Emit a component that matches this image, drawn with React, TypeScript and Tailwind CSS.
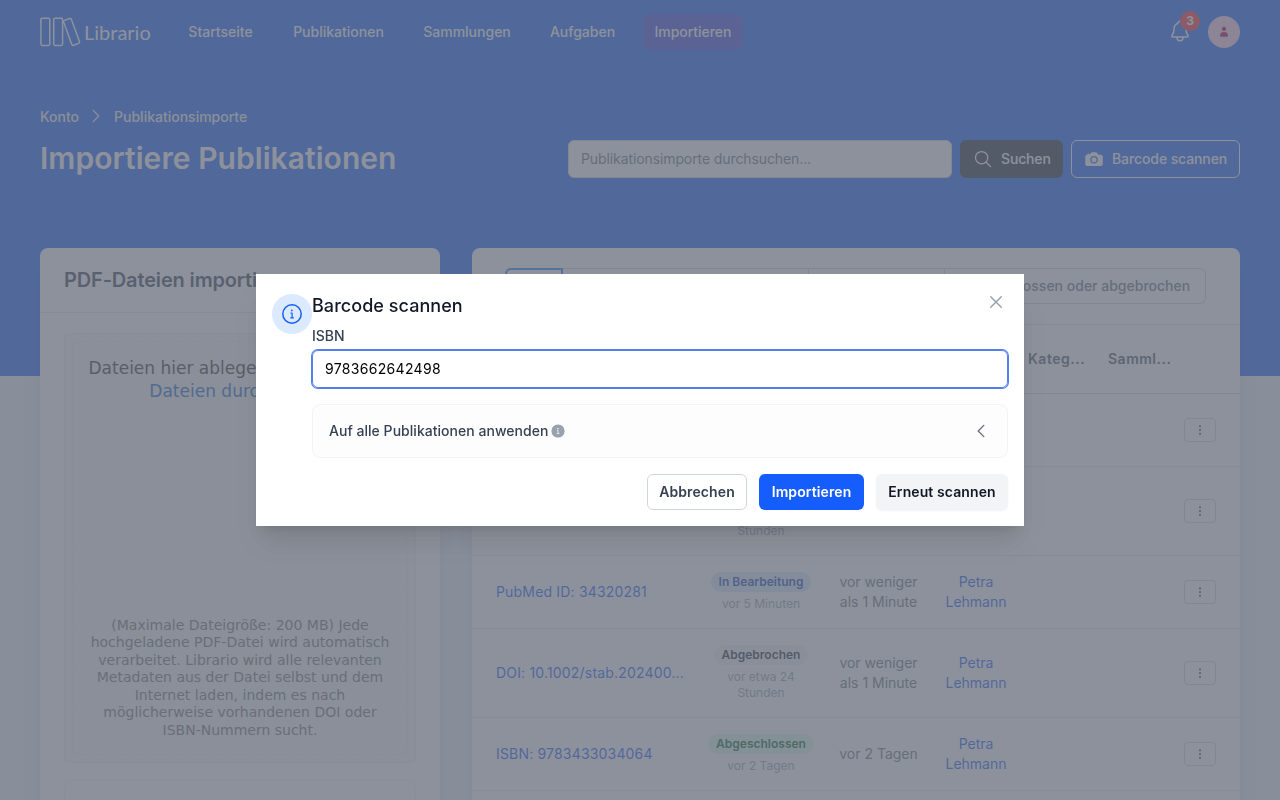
import { useState } from "react"
import {
  IoCamera,
  IoChevronBackOutline,
  IoChevronForwardOutline,
  IoCloseOutline,
  IoEllipsisVertical,
  IoNotificationsOutline,
  IoSearchOutline,
} from "react-icons/io5"

type Status = "In Bearbeitung" | "Abgebrochen" | "Abgeschlossen"

type ImportRow = {
  id: number
  name: string
  status: Status
  statusAge: string
  created: string
  user: string
}

const NAV = [
  { label: "Startseite", width: "w-[89px]" },
  { label: "Publikationen", width: "w-[115px]" },
  { label: "Sammlungen", width: "w-[110px]" },
  { label: "Aufgaben", width: "w-[89px]" },
  { label: "Importieren", width: "w-[100px]", active: true },
]

const ROWS: ImportRow[] = [
  { id: 1, name: "ISBN: 9783662642498", status: "In Bearbeitung", statusAge: "vor 1 Minute", created: "vor weniger als 1 Minute", user: "Petra Lehmann" },
  { id: 2, name: "DOI: 10.1002/best.202300", status: "Abgebrochen", statusAge: "vor etwa 24 Stunden", created: "vor weniger als 1 Minute", user: "Petra Lehmann" },
  { id: 3, name: "PubMed ID: 34320281", status: "In Bearbeitung", statusAge: "vor 5 Minuten", created: "vor weniger als 1 Minute", user: "Petra Lehmann" },
  { id: 4, name: "DOI: 10.1002/stab.202400...", status: "Abgebrochen", statusAge: "vor etwa 24 Stunden", created: "vor weniger als 1 Minute", user: "Petra Lehmann" },
  { id: 5, name: "ISBN: 9783433034064", status: "Abgeschlossen", statusAge: "vor 2 Tagen", created: "vor 2 Tagen", user: "Petra Lehmann" },
]

const BADGE: Record<Status, string> = {
  "In Bearbeitung": "bg-blue-100 text-blue-800",
  Abgebrochen: "bg-gray-100 text-gray-800",
  Abgeschlossen: "bg-green-100 text-green-800",
}

const GRID = "grid grid-cols-[225px_128px_107px_88px_80px_80px_60px] items-center"

function Logo() {
  return (
    <div className="flex h-8 w-[112px] items-center text-white">
      <svg width="42" height="32" viewBox="0 0 42 32" fill="none" stroke="currentColor" strokeWidth="1.5">
        <rect x="0.9" y="2.2" width="8.9" height="27.2" rx="1.4" />
        <rect x="13.7" y="2.2" width="8.9" height="27.2" rx="1.4" />
        <rect x="27.5" y="2.7" width="8.2" height="26.4" rx="1.4" transform="rotate(-20 31.6 15.9)" />
      </svg>
      <span className="ml-[2px] font-['Lato',sans-serif] text-[20px] leading-[30px]">Librario</span>
    </div>
  )
}

function InfoOutline() {
  return (
    <svg className="size-6" viewBox="0 0 24 24" fill="none" stroke="currentColor">
      <circle cx="12" cy="12" r="9.2" strokeWidth="1.5" />
      <circle cx="11.8" cy="8.4" r="0.9" fill="currentColor" stroke="none" />
      <path d="M10.8 11h1.3v4.6M10.7 15.8h2.8" strokeWidth="1.2" strokeLinecap="round" strokeLinejoin="round" />
    </svg>
  )
}

function InfoSolid() {
  return (
    <svg className="ml-[2px] size-4 text-gray-400" viewBox="0 0 16 16" fill="none">
      <circle cx="8" cy="8" r="6.6" fill="currentColor" />
      <circle cx="7.9" cy="5.8" r="0.7" fill="white" />
      <path d="M7.3 7.6h.8v2.7M7.2 10.4h1.8" stroke="white" strokeWidth="0.7" strokeLinecap="round" />
    </svg>
  )
}

function NavBar() {
  return (
    <nav className="flex h-16 items-center justify-between px-10">
      <div className="flex items-center">
        <Logo />
        <div className="ml-6 flex gap-4">
          {NAV.map((item) => (
            <a
              key={item.label}
              className={`${item.width} rounded-md py-2 text-center text-sm font-medium text-white ${item.active ? "bg-[#3b48e2] tracking-[-0.05px]" : ""}`}
            >
              {item.label}
            </a>
          ))}
        </div>
      </div>
      <div className="flex items-center gap-4">
        <div className="relative size-6 text-white">
          <IoNotificationsOutline className="-mt-px size-6" />
          <span className="absolute -top-[9px] left-3 flex size-5 items-center justify-center rounded-full bg-red-500 text-xs font-bold">3</span>
        </div>
        <div className="flex size-8 items-center justify-center rounded-full bg-pink-200 text-pink-800">
          <svg className="size-3" viewBox="0 0 12 12" fill="currentColor">
            <circle cx="6" cy="2.9" r="2.1" />
            <path d="M2 9.4c0-2.1 1.8-3.3 4-3.3s4 1.2 4 3.3c0 .9-.5 1.4-1.3 1.4H3.3C2.5 10.8 2 10.3 2 9.4z" />
          </svg>
        </div>
      </div>
    </nav>
  )
}

function PageHeader() {
  return (
    <header className="px-10 pt-[43px]">
      <div className="flex items-center text-sm font-medium text-gray-100">
        <span>Konto</span>
        <IoChevronForwardOutline className="-mt-0.5 mr-2 ml-[7px] size-5 [&_path]:[stroke-width:32px]" />
        <span>Publikationsimporte</span>
      </div>
      <div className="mt-[13px] flex items-center justify-between">
        <h1 className="pb-0.5 text-3xl font-semibold tracking-[0.06px] text-white">Importiere Publikationen</h1>
        <div className="flex gap-2">
          <input
            placeholder="Publikationsimporte durchsuchen..."
            className="h-[38px] w-96 rounded-md border border-gray-300 bg-white px-3 pb-0.5 text-sm tracking-[-0.1px] placeholder:text-gray-500"
          />
          <button className="flex h-[38px] w-[103px] items-center rounded-md bg-gray-800 pl-[13px] text-sm font-medium tracking-[-0.15px] text-white">
            <IoSearchOutline className="mr-2 size-5" />
            Suchen
          </button>
          <button className="flex h-[38px] w-[169px] items-center rounded-md border border-white pl-3 text-sm font-medium tracking-[-0.1px] text-white">
            <IoCamera className="mr-2 size-5" />
            Barcode scannen
          </button>
        </div>
      </div>
    </header>
  )
}

function ApplyToAll() {
  return (
    <div className="flex h-[54px] items-center justify-between rounded-lg border border-gray-100 bg-[#fdfdfe] px-4 text-sm font-medium text-gray-700">
      <span className="flex items-center tracking-[0.03px]">
        Auf alle Publikationen anwenden
        <InfoSolid />
      </span>
      <IoChevronBackOutline className="size-5 text-gray-500 [&_path]:[stroke-width:36px]" />
    </div>
  )
}

function UploadCard() {
  return (
    <section className="h-[700px] w-[400px] shrink-0 rounded-lg bg-white shadow-xl">
      <h2 className="flex h-[65px] items-center border-b border-gray-200 px-6 text-xl font-semibold tracking-[-0.15px] text-gray-700">
        PDF-Dateien importieren
      </h2>
      <div className="px-6 pt-5">
        <div className="h-[430px] rounded-[5px] border border-[#efefef] bg-[#f5f5f5] p-[7px] font-['DejaVu_Sans',sans-serif]">
          <div className="flex h-full flex-col items-center justify-between rounded border border-dashed border-[#ececec] px-2 pt-[15px] pb-[15px] text-center">
            <p className="w-[320px] text-[17px] leading-[23px] text-[#333]">
              Dateien hier ablegen einfügen oder <span className="text-[#1269cf]">Dateien durchsuchen</span>
            </p>
            <p className="w-[310px] text-[14px] leading-[17.5px] text-[#757575]">
              (Maximale Dateigröße: 200 MB) Jede hochgeladene PDF-Datei wird automatisch verarbeitet. Librario wird alle
              relevanten Metadaten aus der Datei selbst und dem Internet laden, indem es nach möglicherweise vorhandenen
              DOI oder ISBN-Nummern sucht.
            </p>
          </div>
        </div>
        <div className="mt-[17px]">
          <ApplyToAll />
        </div>
      </div>
    </section>
  )
}

function ImportTable() {
  return (
    <section className="h-[700px] flex-1 rounded-lg bg-white shadow-xl">
      <div className="flex h-[77px] border-b border-gray-200 pt-5 pl-[33px] text-sm font-medium text-gray-500">
        <div className="flex h-9 w-[58px] items-center justify-center rounded-l-md border-2 border-blue-500 text-blue-600">Alle</div>
        <div className="flex h-9 w-[246px] items-center justify-center border-y border-r border-gray-300">Wartend oder in Bearbeitung</div>
        <div className="flex h-9 w-[136px] items-center justify-center border-y border-r border-gray-300">Abgeschlossen</div>
        <div className="flex h-9 w-[261px] items-center justify-center rounded-r-md border-y border-r border-gray-300">
          Abgeschlossen oder abgebrochen
        </div>
      </div>
      <div className={`${GRID} h-[69px] border-b border-gray-300 text-sm font-semibold tracking-[0.5px] text-gray-600`}>
        <span className="pl-6">Name</span>
        <span className="text-center">Status</span>
        <span className="text-center">Erstellt</span>
        <span className="text-center">Benutzer</span>
        <span className="pl-2">Kateg...</span>
        <span className="pl-2">Samml...</span>
      </div>
      {ROWS.map((row) => (
        <div key={row.id} className={`${GRID} border-b border-gray-200 py-4 text-sm text-gray-500`}>
          <a className="pl-6 tracking-[0.18px] whitespace-nowrap text-blue-600">{row.name}</a>
          <div className="flex flex-col items-center gap-1 px-4 text-center text-xs text-gray-400">
            <span className={`h-5 rounded-full px-2 leading-5 font-semibold whitespace-nowrap ${BADGE[row.status]}`}>{row.status}</span>
            <span className="w-20">{row.statusAge}</span>
          </div>
          <span className="px-3 text-center">{row.created}</span>
          <a className="px-3 text-center text-blue-600">{row.user}</a>
          <span />
          <span />
          <button className="ml-1 flex h-6 w-8 items-center justify-center rounded border border-gray-300 text-gray-600">
            <IoEllipsisVertical className="size-3" />
          </button>
        </div>
      ))}
    </section>
  )
}

function BarcodeDialog() {
  const [isbn, setIsbn] = useState("9783662642498")

  return (
    <div className="fixed inset-0 flex items-center justify-center bg-[#656c79]/75">
      <div className="flex h-[252px] w-[768px] bg-white p-4 shadow-xl">
        <div className="mt-1 flex size-10 shrink-0 items-center justify-center rounded-full bg-blue-100 text-blue-600">
          <InfoOutline />
        </div>
        <div className="flex-1">
          <div className="flex h-[34px] items-start justify-between">
            <h3 className="pt-1 text-lg leading-6 font-medium tracking-[0.05px] text-gray-900">Barcode scannen</h3>
            <IoCloseOutline className="size-6 text-gray-400" />
          </div>
          <label className="block pt-0.5 text-sm font-medium text-gray-700">ISBN</label>
          <input
            value={isbn}
            onChange={(e) => setIsbn(e.target.value)}
            className="mt-1 block h-[38px] w-full rounded-md border border-[#5b7be6] px-3 pb-0.5 text-sm tracking-[0.32px] text-black ring-1 ring-[#4a80f0] outline-none"
          />
          <div className="mt-4">
            <ApplyToAll />
          </div>
          <div className="mt-4 flex justify-end gap-3 text-sm font-semibold tracking-[0.1px]">
            <button className="h-9 w-[100px] rounded-md border border-gray-300 bg-white text-gray-700">Abbrechen</button>
            <button className="h-9 w-[105px] rounded-md bg-blue-600 text-white">Importieren</button>
            <button className="h-9 w-[132px] rounded-md bg-gray-100 text-gray-900 shadow-xs">Erneut scannen</button>
          </div>
        </div>
      </div>
    </div>
  )
}

export default function App() {
  return (
    <div className="h-screen overflow-hidden bg-slate-100 font-['Inter',sans-serif]">
      <div className="h-[376px] bg-blue-600">
        <NavBar />
        <PageHeader />
      </div>
      <main className="-mt-32 flex gap-8 px-10">
        <UploadCard />
        <ImportTable />
      </main>
      <BarcodeDialog />
    </div>
  )
}
